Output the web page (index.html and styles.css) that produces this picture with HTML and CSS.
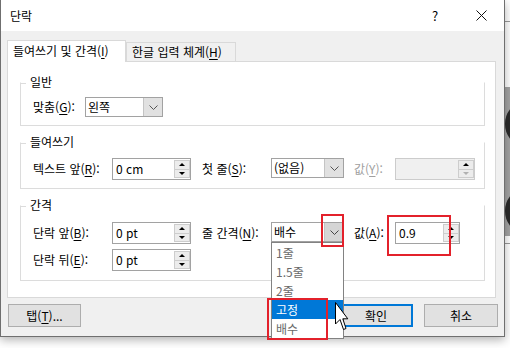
FILE: index.html
```html
<!DOCTYPE html>
<html lang="ko">

<head>
    <meta charset="UTF-8">
    <title>단락</title>
    <link rel="stylesheet" href="styles.css">
</head>

<body>
    <div class="dialog">
        <div class="titlebar">
            <span class="title">단락</span>
            <span class="cap-btn help">?</span>
            <span class="cap-btn">
                <svg width="11" height="11" viewBox="0 0 11 11"><path d="M0.5 0.5 L10.5 10.5 M10.5 0.5 L0.5 10.5" stroke="#111" stroke-width="1" fill="none"/></svg>
            </span>
        </div>

        <div class="body">
            <div class="tabs">
                <div class="tab active">들여쓰기 및 간격(<u>I</u>)</div>
                <div class="tab">한글 입력 체계(<u>H</u>)</div>
            </div>

            <div class="panel">
                <fieldset class="group g-general">
                    <legend>일반</legend>
                    <div class="group-body">
                        <div class="row short">
                            <span class="label lw-short">맞춤(<u>G</u>):</span>
                            <div class="combo cw-align">
                                <span class="combo-text">왼쪽</span>
                                <span class="combo-btn"><svg width="9" height="5" viewBox="0 0 9 5"><path d="M0.5 0.5 L4.5 4.5 L8.5 0.5" fill="none" stroke="#555"/></svg></span>
                            </div>
                        </div>
                    </div>
                </fieldset>

                <fieldset class="group g-indent">
                    <legend>들여쓰기</legend>
                    <div class="group-body">
                        <div class="row">
                            <span class="label lw-1">텍스트 앞(<u>R</u>):</span>
                            <div class="spin sw-1">
                                <span class="spin-text">0 cm</span>
                                <span class="spin-btns"><span class="sb up"></span><span class="sb down"></span></span>
                            </div>
                            <span class="label lw-2">첫 줄(<u>S</u>):</span>
                            <div class="combo cw-line">
                                <span class="combo-text">(없음)</span>
                                <span class="combo-btn"><svg width="9" height="5" viewBox="0 0 9 5"><path d="M0.5 0.5 L4.5 4.5 L8.5 0.5" fill="none" stroke="#555"/></svg></span>
                            </div>
                            <span class="label lw-3 disabled">값(<u>Y</u>):</span>
                            <div class="spin sw-wide disabled">
                                <span class="spin-text"></span>
                                <span class="spin-btns"><span class="sb up"></span><span class="sb down"></span></span>
                            </div>
                        </div>
                    </div>
                </fieldset>

                <fieldset class="group g-spacing">
                    <legend>간격</legend>
                    <div class="group-body">
                        <div class="row">
                            <span class="label lw-1">단락 앞(<u>B</u>):</span>
                            <div class="spin sw-1">
                                <span class="spin-text">0 pt</span>
                                <span class="spin-btns"><span class="sb up"></span><span class="sb down"></span></span>
                            </div>
                            <span class="label lw-2">줄 간격(<u>N</u>):</span>
                            <div class="combo cw-line open">
                                <span class="combo-text">배수</span>
                                <span class="combo-btn"><svg width="9" height="5" viewBox="0 0 9 5"><path d="M0.5 0.5 L4.5 4.5 L8.5 0.5" fill="none" stroke="#444"/></svg></span>
                                <span class="mark mark-btn"></span>
                                <ul class="dropdown">
                                    <li>1줄</li>
                                    <li>1.5줄</li>
                                    <li>2줄</li>
                                    <li class="selected">고정</li>
                                    <li>배수</li>
                                    <span class="mark mark-list"></span>
                                </ul>
                            </div>
                            <span class="label lw-3">값(<u>A</u>):</span>
                            <div class="spin sw-small">
                                <span class="spin-text">0.9</span>
                                <span class="spin-btns"><span class="sb up"></span><span class="sb down"></span></span>
                                <span class="mark mark-value"></span>
                            </div>
                        </div>
                        <div class="row">
                            <span class="label lw-1">단락 뒤(<u>E</u>):</span>
                            <div class="spin sw-1">
                                <span class="spin-text">0 pt</span>
                                <span class="spin-btns"><span class="sb up"></span><span class="sb down"></span></span>
                            </div>
                        </div>
                    </div>
                </fieldset>
            </div>

            <div class="buttons">
                <div class="btn btn-tab">탭(<u>T</u>)...</div>
                <div class="spacer"></div>
                <div class="btn default">확인</div>
                <div class="btn cancel">취소</div>
            </div>
        </div>

        <svg class="cursor" width="14" height="30" viewBox="0 0 14 30">
            <path d="M0.5 0.5 V22 L5 17.5 L8.5 27.5 L11 26.5 L7.8 16.8 L12.8 16.8 Z" fill="#fff" stroke="#000" stroke-width="1" stroke-linejoin="miter"/>
        </svg>
    </div>

    <div class="side">
        <div class="dash first"></div>
        <div class="doc-block">
            <span class="ring ring-1"></span>
            <span class="ring ring-2"></span>
        </div>
        <div class="dash second"></div>
    </div>
</body>

</html>
```

FILE: styles.css
```css
body {
    margin: 0;
    width: 510px;
    height: 348px;
    overflow: hidden;
    display: flex;
    align-items: flex-start;
    background-color: #fff;
    font-family: "Noto Sans CJK KR", "Noto Sans", sans-serif;
    font-size: 12px;
    color: #000;
}

u {
    text-decoration-thickness: 1px;
    text-underline-offset: 2px;
}

.dialog {
    position: relative;
    width: 505px;
    height: 337px;
    box-sizing: border-box;
    border: 1px solid #6f6f6f;
    border-top: none;
    background-color: #f0f0f0;
    box-shadow: 0 3px 9px rgba(0, 0, 0, 0.3);
    z-index: 1;
}

/* title bar */
.titlebar {
    height: 31px;
    background-color: #fff;
    display: flex;
    align-items: center;
}

.title {
    flex: 1;
    padding-left: 9px;
}

.cap-btn {
    width: 46px;
    height: 31px;
    display: flex;
    align-items: center;
    justify-content: center;
}

.help {
    font-size: 13px;
}

/* body */
.body {
    padding: 9px 0 9px 0;
}

.tabs {
    display: flex;
    align-items: flex-end;
    height: 21px;
    margin: 0 8px 0 6px;
}

.tab {
    box-sizing: border-box;
    height: 19px;
    width: 110px;
    padding-left: 5px;
    border: 1px solid #d9d9d9;
    border-bottom: none;
    line-height: 17px;
    background-color: #f0f0f0;
}

.tab.active {
    position: relative;
    z-index: 1;
    width: 119px;
    height: 22px;
    margin-bottom: -1px;
    line-height: 20px;
    background-color: #fff;
}

.panel {
    margin: 0 8px 0 6px;
    padding: 13px 10px 16px 12px;
    border: 1px solid #d9d9d9;
    background-color: #fff;
}

/* group boxes */
.group {
    margin: 0;
    padding: 0;
    min-width: 0;
    border: 1px solid #dcdcdc;
    border-top-color: transparent;
}

.group + .group {
    margin-top: 9px;
}

.group legend {
    padding: 0;
    line-height: 14px;
}

.group legend::before {
    content: '';
    display: inline-block;
    width: 5px;
    height: 1px;
    margin-right: 4px;
    vertical-align: middle;
    background-color: #dcdcdc;
}

.group-body {
    padding-left: 12px;
}

.g-general .group-body {
    padding-top: 8px;
    padding-bottom: 8px;
}

.g-indent .group-body {
    padding-top: 9px;
    padding-bottom: 8px;
}

.g-spacing .group-body {
    padding-top: 10px;
    padding-bottom: 9px;
    display: flex;
    flex-direction: column;
    gap: 5px;
}

.row {
    display: flex;
    align-items: flex-start;
}

.label {
    line-height: 22px;
    white-space: nowrap;
}

.row.short .label {
    line-height: 20px;
}

.label.disabled {
    color: #a0a0a0;
}

.lw-short { width: 52px; }
.lw-1 { width: 79px; }
.lw-2 { width: 69px; margin-left: 11px; }
.lw-3 { width: 41px; margin-left: 10px; }

/* combo boxes */
.combo {
    position: relative;
    box-sizing: border-box;
    height: 20px;
    display: flex;
    border: 1px solid #a2a2a2;
    background-color: #fff;
}

.cw-align { width: 78px; }
.cw-line { width: 73px; }

.combo-text {
    flex: 1;
    padding-left: 2px;
    line-height: 18px;
}

.combo-btn {
    width: 18px;
    display: flex;
    align-items: center;
    justify-content: center;
    background-color: #e1e1e1;
    border-left: 1px solid #c4c4c4;
}

.combo.open .combo-btn {
    background-color: #d5d5d5;
}

.dropdown {
    position: absolute;
    left: -1px;
    top: calc(100% + 1px);
    width: 73px;
    margin: 0;
    padding: 0;
    list-style: none;
    box-sizing: border-box;
    border: 1px solid #828282;
    background-color: #fff;
    z-index: 5;
}

.dropdown li {
    height: 19px;
    line-height: 19px;
    padding-left: 4px;
    color: #6a6a6a;
}

.dropdown li.selected {
    background-color: #0078d7;
    color: #fff;
}

/* spin boxes */
.spin {
    position: relative;
    box-sizing: border-box;
    height: 22px;
    display: flex;
    border: 1px solid #a2a2a2;
    background-color: #fff;
}

.sw-1 { width: 79px; }
.sw-wide { width: 80px; }
.sw-small { width: 65px; }

.spin.disabled {
    border-color: #cccccc;
    background-color: #f0f0f0;
}

.spin-text {
    flex: 1;
    padding-left: 3px;
    line-height: 20px;
}

.spin-btns {
    width: 16px;
    padding: 1px 0;
    display: flex;
    flex-direction: column;
}

.sb {
    flex: 1;
    display: flex;
    align-items: center;
    justify-content: center;
    border: 1px solid #cdcdcd;
    background-color: #ececec;
}

.sb + .sb {
    border-top: none;
}

.sb.up::after {
    content: '';
    border-left: 3px solid transparent;
    border-right: 3px solid transparent;
    border-bottom: 3px solid #000;
}

.sb.down::after {
    content: '';
    border-left: 3px solid transparent;
    border-right: 3px solid transparent;
    border-top: 3px solid #000;
}

.spin.disabled .sb.down::after {
    border-top-color: #b0b0b0;
}

/* red annotation boxes */
.mark {
    position: absolute;
    box-sizing: border-box;
    border: 2px solid #e3212b;
    z-index: 6;
}

.mark-btn {
    left: 49px;
    top: -9px;
    width: 23px;
    height: 33px;
}

.mark-value {
    left: -9px;
    top: -8px;
    width: 64px;
    height: 41px;
}

.mark-list {
    left: -5px;
    top: 55px;
    width: 61px;
    height: 42px;
}

/* bottom buttons */
.buttons {
    display: flex;
    margin-top: 6px;
    padding: 0 6px 0 7px;
}

.btn {
    box-sizing: border-box;
    width: 74px;
    height: 23px;
    display: flex;
    align-items: center;
    justify-content: center;
    border: 1px solid #adadad;
    background-color: #e1e1e1;
}

.btn-tab {
    width: 73px;
}

.btn.default {
    border: 2px solid #0078d7;
}

.btn.cancel {
    margin-left: 11px;
}

.spacer {
    flex: 1;
}

.cursor {
    position: absolute;
    left: 334px;
    top: 302px;
    z-index: 10;
}

/* document behind the dialog */
.side {
    width: 5px;
    height: 348px;
    overflow: hidden;
    display: flex;
    flex-direction: column;
}

.dash {
    border-top: 1px dashed #9a9a9a;
}

.dash.first {
    margin-top: 21px;
}

.doc-block {
    position: relative;
    height: 149px;
    margin-top: 65px;
    background-color: #a4a4a4;
}

.dash.second {
    margin-top: 7px;
}

.ring {
    position: absolute;
    left: 0;
    width: 48px;
    height: 48px;
    box-sizing: border-box;
    border: 6px solid #2b2b2b;
    border-radius: 50%;
}

.ring-1 { top: 13px; }
.ring-2 { top: 100px; }
```
